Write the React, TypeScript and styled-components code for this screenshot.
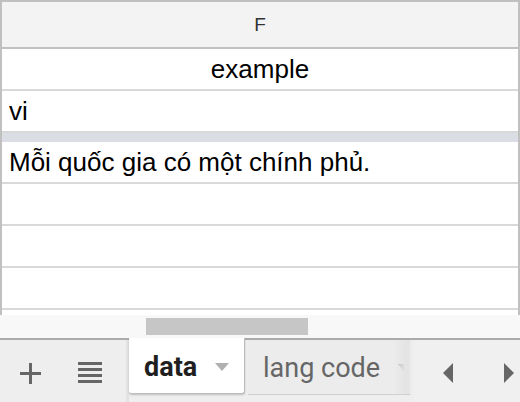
import React from "react";
import styled, {createGlobalStyle} from "styled-components";

const GlobalStyle = createGlobalStyle`
  html, body {
    margin: 0;
    padding: 0;
    background: #ffffff;
  }
  body {
    font-family: "Liberation Sans", Arial, sans-serif;
  }
`

const Page = styled.div`
  width: 520px;
  height: 402px;
  display: flex;
  flex-direction: column;
  overflow: hidden;
`

const Grid = styled.div`
  border: 2px solid #c0c0c0;
  border-bottom: none;
  height: 315px;
  box-sizing: border-box;
  overflow: hidden;
  display: flex;
  flex-direction: column;
  font-family: "Liberation Sans", Arial, sans-serif;
`

const ColumnHeader = styled.div`
  height: 45px;
  flex: none;
  background: #f3f3f3;
  border-bottom: 2px solid #c0c0c0;
  display: flex;
  align-items: center;
  justify-content: center;
  font-size: 19px;
  color: #333;
`

const Row = styled.div<{ $center?: boolean; $height?: number }>`
  height: ${p => p.$height ?? 40}px;
  flex: none;
  border-bottom: 2px solid #d9d9d9;
  display: flex;
  align-items: center;
  justify-content: ${p => (p.$center ? "center" : "flex-start")};
  padding: 0 7px;
  font-size: 26px;
  color: #000;
  white-space: nowrap;
`

const FreezeBand = styled.div`
  height: 9px;
  flex: none;
  background: #dadde4;
`

const HScroll = styled.div`
  height: 23px;
  flex: none;
  background: #f8f8f8;
  display: flex;
  align-items: center;
  padding-left: 146px;
`

const Thumb = styled.div`
  width: 162px;
  height: 17px;
  background: #c6c6c6;
`

const TabBar = styled.div`
  flex: 1;
  display: flex;
  background: #eeeeee;
  border-top: 2px solid #ababab;
  font-family: Roboto, "Liberation Sans", sans-serif;
`

const ToolButton = styled.div`
  width: 60px;
  display: flex;
  align-items: center;
  justify-content: center;
  padding-top: 4px;
  color: #666;
`

const ToolGroup = styled.div`
  display: flex;
  width: 126px;
  border-right: 3px solid #e3e3e3;
`

const Tab = styled.div<{ $active?: boolean; $width: number }>`
  width: ${p => p.$width}px;
  height: ${p => (p.$active ? 56 : 55)}px;
  margin-top: ${p => (p.$active ? -2 : 0)}px;
  box-sizing: border-box;
  display: flex;
  align-items: center;
  gap: 18px;
  padding-left: 15px;
  padding-top: 2px;
  font-size: 27px;
  white-space: nowrap;
  overflow: hidden;
  position: relative;
  background: ${p => (p.$active ? "#ffffff" : "#ececec")};
  color: ${p => (p.$active ? "#1f1f1f" : "#666")};
  font-weight: ${p => (p.$active ? 700 : 400)};
  border-bottom: 1px solid ${p => (p.$active ? "#bdbdbd" : "#d0d0d0")};
  border-right: 1px solid ${p => (p.$active ? "#bdbdbd" : "transparent")};
  border-radius: ${p => (p.$active ? "0 0 3px 3px" : "0")};
  box-shadow: ${p => (p.$active ? "0 1px 2px rgba(0,0,0,0.2)" : "none")};
  z-index: ${p => (p.$active ? 1 : 0)};
  margin-right: 3px;
`

const Fade = styled.div`
  position: absolute;
  right: 0;
  top: 0;
  bottom: 0;
  width: 16px;
  background: linear-gradient(to right, rgba(228,228,228,0), #e4e4e4 70%);
`

const Caret = styled.span`
  flex: none;
  width: 0;
  height: 0;
  border-left: 7px solid transparent;
  border-right: 7px solid transparent;
  border-top: 8px solid #b0b0b0;
`

const Nav = styled.div`
  flex: 1;
  display: flex;
  align-items: center;
  justify-content: space-between;
  padding: 4px 6px 0 29px;
  background: #f0f0f0;
  color: #666;
`

const Plus = () => (
  <svg width="21" height="21" viewBox="0 0 21 21">
    <rect x="9" y="0" width="3" height="21" fill="#666"/>
    <rect x="0" y="9" width="21" height="3" fill="#666"/>
  </svg>
)

const Sheets = () => (
  <svg width="24" height="22" viewBox="0 0 24 22">
    {[0, 6, 12, 18].map(y => <rect key={y} x="0" y={y} width="24" height="3" fill="#666"/>)}
  </svg>
)

const Arrow = ({dir}: {dir: "left" | "right"}) => (
  <svg width="10" height="20" viewBox="0 0 10 20">
    <polygon points={dir === "left" ? "10,0 0,10 10,20" : "0,0 10,10 0,20"} fill="#666"/>
  </svg>
)

export default function App() {
  return (
    <Page>
      <GlobalStyle/>
      <Grid>
        <ColumnHeader>F</ColumnHeader>
        <Row $center>example</Row>
        <Row>vi</Row>
        <FreezeBand/>
        <Row>Mỗi quốc gia có một chính phủ.</Row>
        <Row/>
        <Row/>
        <Row/>
        <Row $height={5}/>
      </Grid>
      <HScroll><Thumb/></HScroll>
      <TabBar>
        <ToolGroup>
          <ToolButton><Plus/></ToolButton>
          <ToolButton><Sheets/></ToolButton>
        </ToolGroup>
        <Tab $active $width={116}>data<Caret/></Tab>
        <Tab $width={163}>lang code<Caret/><Fade/></Tab>
        <Nav>
          <Arrow dir="left"/>
          <Arrow dir="right"/>
        </Nav>
      </TabBar>
    </Page>
  )
}
